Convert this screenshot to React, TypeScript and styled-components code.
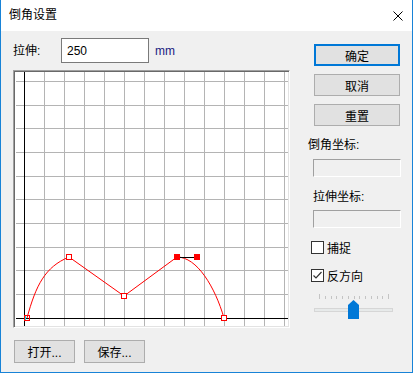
import * as React from 'react';
import styled, { createGlobalStyle } from 'styled-components';

const GlobalStyle = createGlobalStyle`
    html, body {
        margin: 0;
        padding: 0;
        background: #f0f0f0;
    }
    body {
        font-family: "Liberation Sans", "Noto Sans CJK SC", sans-serif;
        font-size: 12px;
        color: #000;
    }
`;

const Window = styled.div`
    width: 413px;
    height: 373px;
    box-sizing: border-box;
    border: 1px solid #1883d7;
    border-top: none;
    background: #f0f0f0;
    display: flex;
    flex-direction: column;
`;

const TitleBar = styled.div`
    height: 31px;
    flex: none;
    background: #fff;
    display: flex;
    align-items: center;
    justify-content: space-between;
    padding: 0 9px 0 8px;
`;

const Title = styled.span`
    font-size: 12px;
    line-height: 16px;
    margin-top: -1px;
`;

const Body = styled.div`
    flex: 1;
    display: grid;
    grid-template-columns: 277px 86px;
    column-gap: 24px;
    padding: 0 11px 0 12px;
`;

const LeftColumn = styled.div`
    display: flex;
    flex-direction: column;
    padding-top: 7px;
`;

const StretchRow = styled.div`
    display: flex;
    align-items: center;
    height: 25px;
`;

const FieldLabel = styled.span<{ $offset?: number }>`
    line-height: 16px;
    margin-left: ${(p) => p.$offset ?? 0}px;
`;

const StretchLabel = styled(FieldLabel)`
    width: 48px;
    margin-top: 1px;
`;

const TextInput = styled.div`
    width: 88px;
    height: 25px;
    box-sizing: border-box;
    border: 1px solid #7a7a7a;
    background: #fff;
    padding-left: 5px;
    display: flex;
    align-items: center;
    font-size: 12px;
`;

const Unit = styled.span`
    margin-left: 6px;
    color: #1a1a80;
    font-size: 12px;
`;

const Canvas = styled.div`
    margin-top: 7px;
    width: 277px;
    height: 258px;
    box-sizing: border-box;
    border-top: 1px solid #a0a0a0;
    border-left: 1px solid #a0a0a0;
    border-right: 1px solid #fff;
    border-bottom: 1px solid #fff;
    box-shadow: inset 1px 1px 0 #696969, inset -1px -1px 0 #e3e3e3;
    background: #fff;
    svg {
        display: block;
    }
`;

const FileButtons = styled.div`
    display: flex;
    gap: 9px;
    margin-top: 12px;
    padding-left: 1px;
`;

const Button = styled.div<{ $primary?: boolean; $width?: number; $height?: number; $top?: number }>`
    width: ${(p) => p.$width ?? 86}px;
    height: ${(p) => p.$height ?? 22}px;
    margin-top: ${(p) => p.$top ?? 0}px;
    box-sizing: border-box;
    background: #e1e1e1;
    border: ${(p) => (p.$primary ? '2px solid #0078d7' : '1px solid #adadad')};
    display: flex;
    align-items: center;
    justify-content: center;
    font-size: 12px;
`;

const RightColumn = styled.div`
    display: flex;
    flex-direction: column;
`;

const SideLabel = styled(FieldLabel)<{ $top: number }>`
    margin-top: ${(p) => p.$top}px;
`;

const ReadOnlyField = styled.div<{ $top: number; $height: number }>`
    margin-top: ${(p) => p.$top}px;
    margin-left: -1px;
    width: 88px;
    height: ${(p) => p.$height}px;
    box-sizing: border-box;
    border-top: 1px solid #a0a0a0;
    border-left: 1px solid #a0a0a0;
    border-right: 1px solid #fff;
    border-bottom: 1px solid #fff;
    background: #f0f0f0;
`;

const CheckRow = styled.div<{ $top: number }>`
    margin-top: ${(p) => p.$top}px;
    margin-left: -3px;
    height: 16px;
    display: flex;
    align-items: center;
    gap: 3px;
`;

const CheckBox = styled.div`
    width: 13px;
    height: 13px;
    box-sizing: border-box;
    border: 1px solid #333;
    background: #fff;
    svg {
        display: block;
    }
`;

const Slider = styled.div`
    position: relative;
    margin-top: 10px;
    height: 27px;
`;

const Ticks = styled.div`
    margin-left: 5px;
    width: 70px;
    height: 7px;
    display: flex;
    justify-content: space-between;
    align-items: flex-end;
`;

const Tick = styled.div<{ $long?: boolean }>`
    width: 1px;
    height: ${(p) => (p.$long ? 5 : 3)}px;
    margin-bottom: 1px;
    background: #c4c4c4;
`;

const Track = styled.div`
    margin-top: 8px;
    width: 79px;
    height: 4px;
    box-sizing: border-box;
    border: 1px solid #d6d6d6;
    background: #e7eaea;
`;

const Thumb = styled.svg`
    position: absolute;
    left: 34px;
    top: 7px;
`;

const hLines = [10, 34, 57, 81, 105, 128, 152, 176, 199, 223];
const vLines = Array.from({ length: 13 }, (_, i) => 30 + i * 20);

const Graph = () => (
    <svg width={275} height={256} viewBox="0 0 275 256">
        {vLines.map((x) => (
            <line key={'v' + x} x1={x + 0.5} y1={1} x2={x + 0.5} y2={255} stroke="#b4b4b4" />
        ))}
        {hLines.map((y) => (
            <line key={'h' + y} x1={2} y1={y + 0.5} x2={274} y2={y + 0.5} stroke="#b4b4b4" />
        ))}
        <line x1={10.5} y1={1} x2={10.5} y2={255} stroke="#000" />
        <line x1={2} y1={247.5} x2={274} y2={247.5} stroke="#000" />
        <path
            d="M13,247 C22,214 31,196 55,186 L110,225 L163,186 C183,186 201,216 210,247"
            fill="none"
            stroke="#ff0000"
        />
        <rect x={10} y={244} width={2} height={6} fill="#00e0e0" />
        <rect x={10.5} y={244.5} width={5} height={5} fill="none" stroke="#ff0000" />
        <rect x={52.5} y={183.5} width={5} height={5} fill="#fff" stroke="#ff0000" />
        <rect x={107.5} y={222.5} width={5} height={5} fill="#fff" stroke="#ff0000" />
        <rect x={207.5} y={244.5} width={5} height={5} fill="#fff" stroke="#ff0000" />
        <line x1={163} y1={186.5} x2={183} y2={186.5} stroke="#000" />
        <rect x={160} y={183} width={6} height={6} fill="#ff0000" />
        <rect x={180} y={183} width={6} height={6} fill="#ff0000" />
    </svg>
);

const CloseIcon = () => (
    <svg width={10} height={10} viewBox="0 0 10 10">
        <path d="M0.5 0.5 L9.5 9.5 M9.5 0.5 L0.5 9.5" stroke="#000" strokeWidth={1} />
    </svg>
);

const App = () => (
    <>
        <GlobalStyle />
        <Window>
            <TitleBar>
                <Title>倒角设置</Title>
                <CloseIcon />
            </TitleBar>
            <Body>
                <LeftColumn>
                    <StretchRow>
                        <StretchLabel>拉伸:</StretchLabel>
                        <TextInput>250</TextInput>
                        <Unit>mm</Unit>
                    </StretchRow>
                    <Canvas>
                        <Graph />
                    </Canvas>
                    <FileButtons>
                        <Button $width={61} $height={23}>打开...</Button>
                        <Button $width={61} $height={23}>保存...</Button>
                    </FileButtons>
                </LeftColumn>
                <RightColumn>
                    <Button $primary $top={13}>确定</Button>
                    <Button $top={8}>取消</Button>
                    <Button $top={8}>重置</Button>
                    <SideLabel $top={11} $offset={-6}>倒角坐标:</SideLabel>
                    <ReadOnlyField $top={6} $height={18} />
                    <SideLabel $top={12} $offset={-1}>拉伸坐标:</SideLabel>
                    <ReadOnlyField $top={5} $height={18} />
                    <CheckRow $top={11}>
                        <CheckBox />
                        <span>捕捉</span>
                    </CheckRow>
                    <CheckRow $top={12}>
                        <CheckBox>
                            <svg width={11} height={11} viewBox="0 0 11 11">
                                <path d="M1.5 5.5 L4 8 L9.5 2" fill="none" stroke="#333" strokeWidth={1.2} />
                            </svg>
                        </CheckBox>
                        <span>反方向</span>
                    </CheckRow>
                    <Slider>
                        <Ticks>
                            {Array.from({ length: 13 }, (_, i) => (
                                <Tick key={i} $long={i === 0 || i === 12} />
                            ))}
                        </Ticks>
                        <Track />
                        <Thumb width={11} height={19} viewBox="0 0 11 19">
                            <path d="M0 5 L5.5 0 L11 5 L11 19 L0 19 Z" fill="#0078d7" />
                        </Thumb>
                    </Slider>
                </RightColumn>
            </Body>
        </Window>
    </>
);

export default App;
